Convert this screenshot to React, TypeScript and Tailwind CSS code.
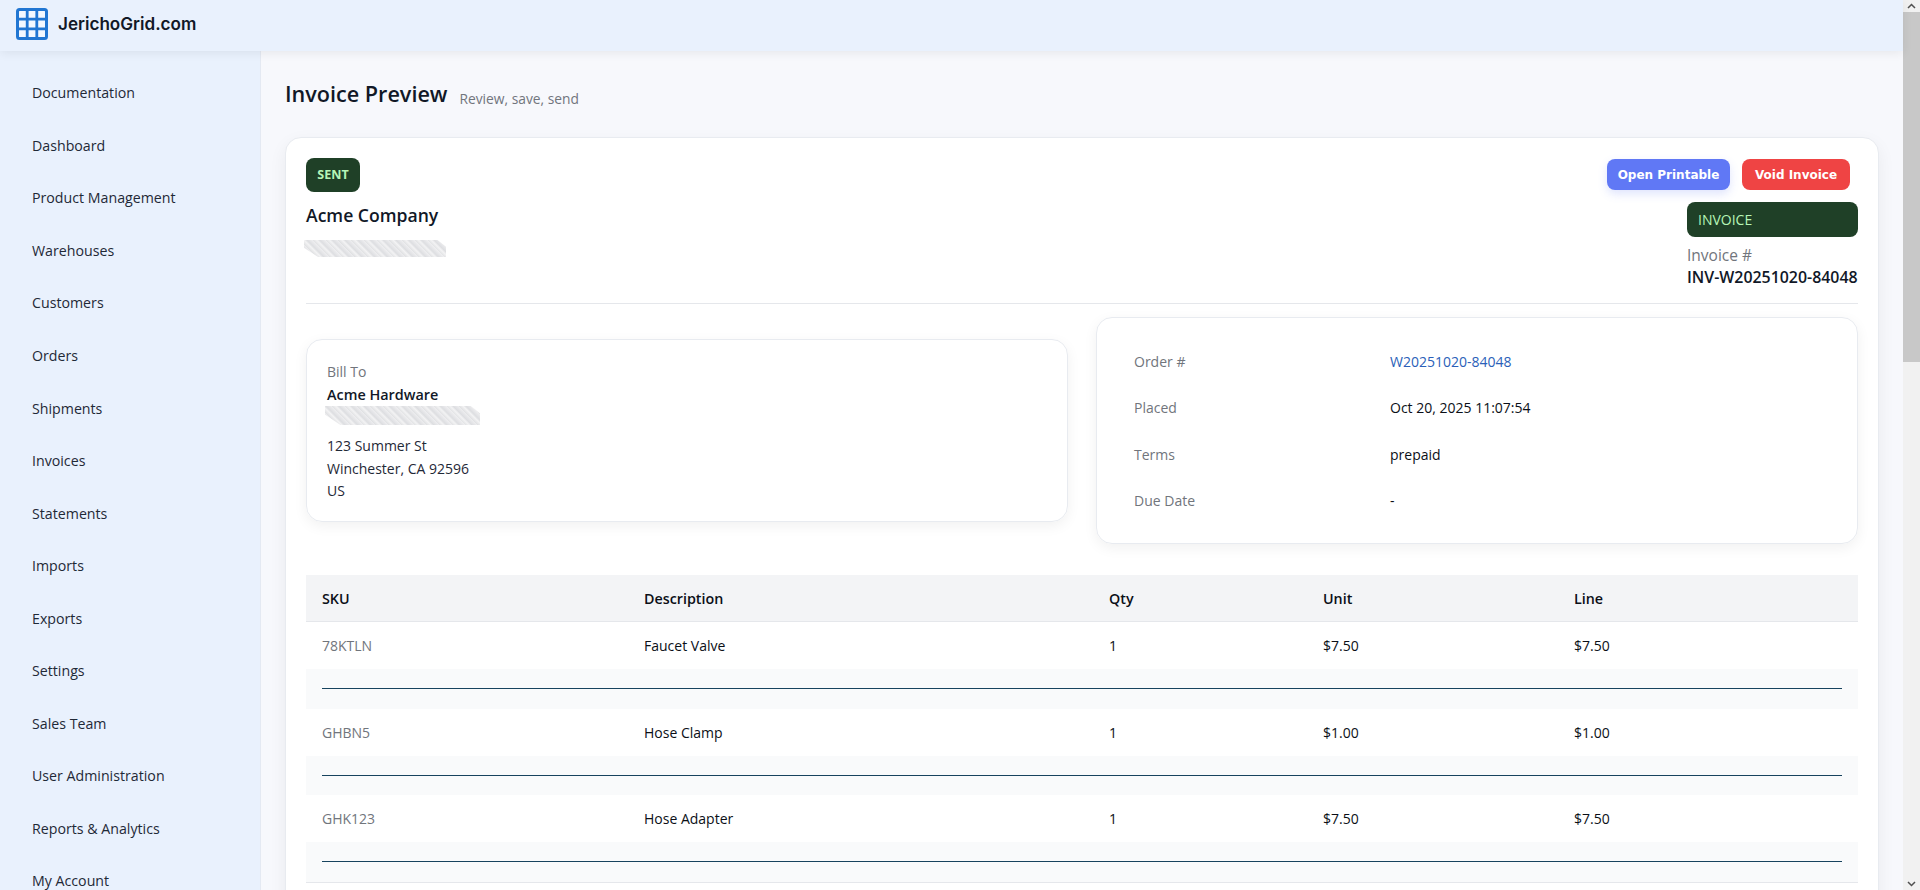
const navItems = ["Documentation", "Dashboard", "Product Management", "Warehouses", "Customers", "Orders", "Shipments", "Invoices", "Statements", "Imports", "Exports", "Settings", "Sales Team", "User Administration", "Reports & Analytics", "My Account"];

const lines = [
  { sku: "78KTLN", name: "Faucet Valve", qty: "1", unit: "$7.50", total: "$7.50" },
  { sku: "GHBN5", name: "Hose Clamp", qty: "1", unit: "$1.00", total: "$1.00" },
  { sku: "GHK123", name: "Hose Adapter", qty: "1", unit: "$7.50", total: "$7.50" },
];

const orderInfo = [
  { label: "Order #", value: "W20251020-84048", link: true },
  { label: "Placed", value: "Oct 20, 2025 11:07:54" },
  { label: "Terms", value: "prepaid" },
  { label: "Due Date", value: "-" },
];

function Logo() {
  return (
    <svg width="32" height="32" viewBox="0 0 32 32" className="shrink-0">
      <rect x="1.5" y="1.5" width="29" height="29" rx="2" fill="#f3f8ff" stroke="#2176d2" strokeWidth="3" />
      <path d="M11.2 2v28M20.8 2v28M2 11.2h28M2 20.8h28" stroke="#2176d2" strokeWidth="2.8" />
    </svg>
  );
}

function Redacted({ className }: { className: string }) {
  return <div className={`bg-[repeating-linear-gradient(45deg,#e0e1e3_0px,#f3f3f4_3px,#dddee1_5px,#eeeef0_9px)] blur-[0.5px] [clip-path:polygon(0_0,94%_0,100%_40%,100%_100%,10%_100%,0_45%)] ${className}`} />;
}

export default function App() {
  return (
    <div className="h-[890px] overflow-hidden flex bg-[#f7f8fc] text-[#111827] font-['Open_Sans','Noto_Sans',sans-serif]">
      <div className="flex-1 min-w-0 flex flex-col">
        <header className="h-[51px] shrink-0 bg-[#e9f1fd] flex items-center pl-4 pb-[4px] gap-[10px] shadow-[0_2px_10px_rgba(0,0,0,0.07)] relative z-10">
          <Logo />
          <span className="font-['Inter',sans-serif] font-semibold text-[17.1px] text-[#111827]">JerichoGrid.com</span>
        </header>
        <div className="flex-1 flex min-h-0">
          <aside className="w-[261px] shrink-0 bg-[#e9f1fd] border-r border-[#e4e9f2] pl-8 pt-[16px]">
            {navItems.map((item) => (
              <div key={item} className="h-[52.55px] flex items-center text-[14.2px] leading-[16px] text-[#1f2937]">{item}</div>
            ))}
          </aside>
          <main className="flex-1 min-w-0 pl-[24px] pr-[24px] pt-[28px]">
            <div className="flex items-end gap-3 h-[31px]">
              <h1 className="text-[21.6px] font-semibold leading-[31px] text-[#111827] mb-px">Invoice Preview</h1>
              <span className="text-[13.8px] text-[#71757c] leading-[24px] -mb-px">Review, save, send</span>
            </div>
            <section className="mt-[27px] bg-white rounded-2xl border border-[#e8ebf0] shadow-[0_6px_18px_rgba(0,0,0,0.06)] px-5 pt-5 h-[800px]">
              <div className="flex justify-between h-[146px] border-b border-[#e5e7eb]">
                <div>
                  <span className="inline-flex items-center justify-center w-[54px] h-[34px] rounded-lg bg-[#1f4027] text-[#b6f5b6] text-[12.5px] font-bold">SENT</span>
                  <div className="mt-[11px] text-[17.6px] font-semibold leading-[24px]">Acme Company</div>
                  <Redacted className="w-[142px] h-[17px] mt-[13px] -ml-[2px]" />
                </div>
                <div className="flex flex-col items-end">
                  <div className="flex gap-3 pr-2 pt-px">
                    <button className="h-[31px] w-[123px] rounded-lg bg-[#6078f5] text-white text-[12px] font-bold font-['DejaVu_Sans',sans-serif] shadow-[0_4px_10px_rgba(96,120,245,0.2)]">Open Printable</button>
                    <button className="h-[31px] w-[108px] rounded-lg bg-[#ef4444] text-white text-[12px] font-bold font-['DejaVu_Sans',sans-serif]">Void Invoice</button>
                  </div>
                  <div className="w-[171px] mt-3">
                    <div className="h-[35px] rounded-lg bg-[#1f4027] text-[#b6f5b6] text-[14px] flex items-center px-[11px]">INVOICE</div>
                    <div className="text-[15.5px] text-[#71757c] mt-[7px] leading-[22px]">Invoice #</div>
                    <div className="text-[15.9px] font-semibold leading-[22px] whitespace-nowrap">INV-W20251020-84048</div>
                  </div>
                </div>
              </div>
              <div className="grid grid-cols-2 gap-7 mt-[13px] items-start">
                <div className="mt-[22px] h-[183px] rounded-2xl border border-[#e8ebf0] shadow-[0_4px_14px_rgba(0,0,0,0.06)] px-[20px] pt-[21px] text-[14px] leading-[22.5px]">
                  <div className="text-[#71757c]">Bill To</div>
                  <div className="font-semibold text-[14.4px]">Acme Hardware</div>
                  <Redacted className="w-[155px] h-[19px] -ml-[2px]" />
                  <div className="mt-[10px] text-[#1f2937]">123 Summer St</div>
                  <div className="text-[#1f2937]">Winchester, CA 92596</div>
                  <div className="text-[#1f2937]">US</div>
                </div>
                <div className="h-[227px] rounded-2xl border border-[#e8ebf0] shadow-[0_4px_14px_rgba(0,0,0,0.06)] pl-[37px] pt-[20px] text-[14px]">
                  {orderInfo.map((row) => (
                    <div key={row.label} className="h-[46.5px] grid grid-cols-[256px_1fr] items-center">
                      <span className="text-[#71757c]">{row.label}</span>
                      <span className={row.link ? "text-[#2b5fb8]" : "text-[#0b0f17]"}>{row.value}</span>
                    </div>
                  ))}
                </div>
              </div>
              <div className="mt-[31px] text-[14px] text-[#0b0f17]">
                <div className="h-[47px] pt-px grid grid-cols-[322px_465px_214px_251px_1fr] items-center bg-[#f3f4f6] border-b border-[#e5e7eb] px-4 font-semibold text-[14.3px]">
                  <span>SKU</span><span>Description</span><span>Qty</span><span>Unit</span><span>Line</span>
                </div>
                {lines.map((row) => (
                  <div key={row.sku}>
                    <div className="h-[47px] grid grid-cols-[322px_465px_214px_251px_1fr] items-center px-4">
                      <span className="text-[#71757c]">{row.sku}</span><span>{row.name}</span><span>{row.qty}</span><span>{row.unit}</span><span>{row.total}</span>
                    </div>
                    <div className="h-[39.5px] bg-[#f9fafb] px-4 flex items-center">
                      <div className="w-full h-px bg-[#17435e]" />
                    </div>
                  </div>
                ))}
                <div className="h-px bg-[#e5e7eb]" />
              </div>
            </section>
          </main>
        </div>
      </div>
      <div className="w-[17px] shrink-0 bg-[#f1f1f1] flex flex-col">
        <div className="h-[12px] flex items-center justify-center">
          <svg width="9" height="6" viewBox="0 0 9 6"><path d="M1 5l3.5-3.5L8 5" fill="none" stroke="#505050" strokeWidth="1.5" /></svg>
        </div>
        <div className="h-[350px] bg-[#c8c8c8]" />
        <div className="mt-auto h-[12px] flex items-center justify-center">
          <svg width="9" height="6" viewBox="0 0 9 6"><path d="M1 1l3.5 3.5L8 1" fill="none" stroke="#505050" strokeWidth="1.5" /></svg>
        </div>
      </div>
    </div>
  );
}
